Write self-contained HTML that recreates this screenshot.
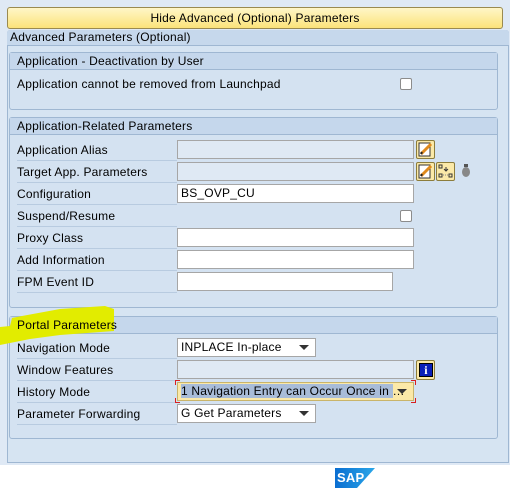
<!DOCTYPE html>
<html><head><style>
*{box-sizing:border-box;margin:0;padding:0}
body{width:510px;height:488px;background:#fff;font-family:"Liberation Sans",Tahoma,sans-serif;font-size:12px;letter-spacing:.2px;color:#000;position:relative;overflow:hidden}
.a{position:absolute}
.top{left:0;top:0;width:510px;height:465px;background:#dfe9f5}
.btn{left:7px;top:7px;width:496px;height:22px;border:1px solid #9a8a50;border-radius:3px;background:linear-gradient(#fff6c8,#fbe37a);text-align:center;line-height:20px}
.outer{left:7px;top:30px;width:502px;height:433px;background:#d6e4f2;border:1px solid #9fb7d2;border-radius:3px 3px 0 0}
.ohd{left:7px;top:30px;width:502px;height:16px;background:#c6d8ec;border-bottom:1px solid #9fb7d2;padding-left:3px;line-height:15px;border-radius:3px 3px 0 0}
.grp{border:1px solid #9fb7d2;border-radius:3px;background:#d4e2f1}
.ghd{height:17px;background:#c5d7ec;border-bottom:1px solid #9fb7d2;padding-left:7px;line-height:16px}
.lbl{left:17px;width:160px;height:22px;line-height:22px;border-bottom:1px solid #b8cbe0}
.in{height:19px;border:1px solid #a6a6a6;background:#fff;padding-left:3px;line-height:17px}
.ro{background:#dfe9f4}
.cb{width:12px;height:12px;border:1px solid #8c8c8c;background:#fff;border-radius:2px}
.dd::after{content:"";position:absolute;right:6px;top:6px;border-left:5px solid transparent;border-right:5px solid transparent;border-top:5px solid #333}
.ib{width:19px;height:19px;border:1px solid #8c7d3c;border-radius:2px;background:#fbe9a8}
.br{position:absolute;width:5px;height:5px;border-color:#d82020;border-style:solid;border-width:0}
</style></head><body>
<div class="a top"></div>
<div class="a btn">Hide Advanced (Optional) Parameters</div>
<div class="a outer"></div>
<div class="a ohd">Advanced Parameters (Optional)</div>

<div class="a grp" style="left:9px;top:52px;width:489px;height:58px"><div class="ghd">Application - Deactivation by User</div></div>
<div class="a" style="left:17px;top:77px">Application cannot be removed from Launchpad</div>
<div class="a cb" style="left:400px;top:78px"></div>

<div class="a grp" style="left:9px;top:117px;width:489px;height:191px"><div class="ghd">Application-Related Parameters</div></div>
<div class="a lbl" style="top:139px">Application Alias</div>
<div class="a lbl" style="top:161px">Target App. Parameters</div>
<div class="a lbl" style="top:183px">Configuration</div>
<div class="a lbl" style="top:205px">Suspend/Resume</div>
<div class="a lbl" style="top:227px">Proxy Class</div>
<div class="a lbl" style="top:249px">Add Information</div>
<div class="a lbl" style="top:271px">FPM Event ID</div>
<div class="a in ro" style="left:177px;top:140px;width:237px"></div>
<div class="a in ro" style="left:177px;top:162px;width:237px"></div>
<div class="a in" style="left:177px;top:184px;width:237px">BS_OVP_CU</div>
<div class="a cb" style="left:400px;top:210px"></div>
<div class="a in" style="left:177px;top:228px;width:237px"></div>
<div class="a in" style="left:177px;top:250px;width:237px"></div>
<div class="a in" style="left:177px;top:272px;width:216px"></div>
<div class="a ib" style="left:416px;top:140px"><svg width="17" height="17"><rect x="2" y="2" width="11" height="13" fill="#fff" stroke="#333"/><path d="M4 13 L14 3" stroke="#e08a1c" stroke-width="3"/><path d="M4 13 L5 11" stroke="#222" stroke-width="2"/></svg></div>
<div class="a ib" style="left:416px;top:162px"><svg width="17" height="17"><rect x="2" y="2" width="11" height="13" fill="#fff" stroke="#333"/><path d="M4 13 L14 3" stroke="#e08a1c" stroke-width="3"/><path d="M4 13 L5 11" stroke="#222" stroke-width="2"/></svg></div>
<div class="a ib" style="left:436px;top:162px"><svg width="17" height="17"><rect x="2" y="2" width="3" height="3" fill="none" stroke="#333"/><rect x="2" y="11" width="3" height="3" fill="none" stroke="#333"/><rect x="12" y="11" width="3" height="3" fill="none" stroke="#333"/><path d="M9 4v4M7 6l2 2 2-2" stroke="#333" fill="none"/><path d="M6 12h5" stroke="#888" stroke-dasharray="1 1"/></svg></div>
<svg class="a" style="left:461px;top:164px" width="10" height="14"><ellipse cx="5" cy="8" rx="4" ry="5" fill="#888"/><rect x="3" y="0" width="4" height="3" fill="#555"/></svg>

<div class="a grp" style="left:9px;top:316px;width:489px;height:123px"><div class="ghd"></div></div>
<svg class="a" style="left:0;top:300px" width="120" height="50"><polygon points="22,16 60,9 105,6 114,9 114,31 60,35 30,39 10,43 0,45 0,27 10,26 12,18" fill="#e2ec00"/></svg>
<div class="a" style="left:17px;top:317px;line-height:16px">Portal Parameters</div>
<div class="a lbl" style="top:337px">Navigation Mode</div>
<div class="a lbl" style="top:359px">Window Features</div>
<div class="a lbl" style="top:381px">History Mode</div>
<div class="a lbl" style="top:403px">Parameter Forwarding</div>
<div class="a in dd" style="left:177px;top:338px;width:139px">INPLACE In-place</div>
<div class="a in ro" style="left:177px;top:360px;width:237px"></div>
<div class="a" style="left:416px;top:360px;width:19px;height:20px;border:1px solid #8c7d3c;border-radius:2px;background:#fbe9a8"><div style="position:absolute;left:2px;top:2px;width:14px;height:14px;background:#0a1fb8;border:1px solid #000;color:#fff;font-weight:bold;font-size:12px;line-height:12px;text-align:center;font-family:'Liberation Serif',serif">i</div></div>
<div class="a in dd" style="left:177px;top:382px;width:237px;background:#fbe9a8;border-color:#c9b46a"><span style="background:#a8bcd8">1 Navigation Entry can Occur Once in </span>…</div>
<div class="br" style="left:175px;top:380px;border-top-width:1px;border-left-width:1px"></div>
<div class="br" style="left:411px;top:380px;border-top-width:1px;border-right-width:1px"></div>
<div class="br" style="left:175px;top:398px;border-bottom-width:1px;border-left-width:1px"></div>
<div class="br" style="left:411px;top:398px;border-bottom-width:1px;border-right-width:1px"></div>
<div class="a in dd" style="left:177px;top:404px;width:139px">G Get Parameters</div>

<div class="a" style="left:335px;top:468px;width:40px;height:20px;background:linear-gradient(90deg,#0a6ed1,#2aa6e8);clip-path:polygon(0 0,100% 0,55% 100%,0 100%);color:#fff;font-weight:bold;font-size:13px;line-height:19px;padding-left:2px">SAP</div>
</body></html>
